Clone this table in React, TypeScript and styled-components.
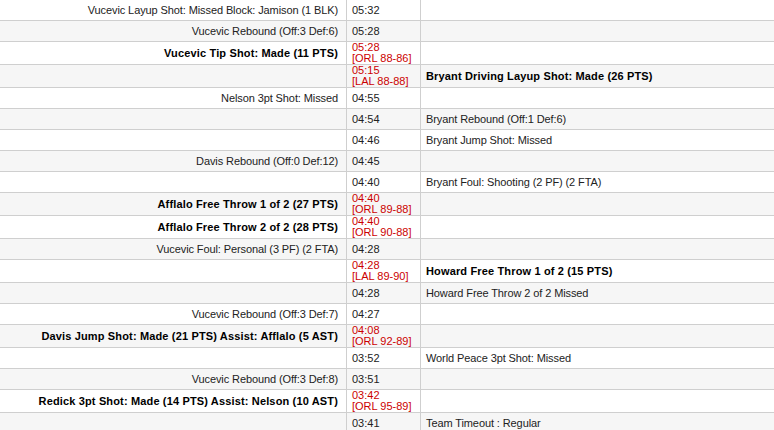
import React from "react";
import styled, { createGlobalStyle } from "styled-components";

const Global = createGlobalStyle`
  html, body { margin: 0; padding: 0; background: #fff; }
  body { font-family: "Liberation Sans", Arial, sans-serif; font-size: 11px; color: #222; }
`;

type Play = {
  time: string;
  score?: string;
  side: "L" | "R";
  text: string;
};

const plays: Play[] = [
  { time: "05:32", side: "L", text: "Vucevic Layup Shot: Missed Block: Jamison (1 BLK)" },
  { time: "05:28", side: "L", text: "Vucevic Rebound (Off:3 Def:6)" },
  { time: "05:28", score: "[ORL 88-86]", side: "L", text: "Vucevic Tip Shot: Made (11 PTS)" },
  { time: "05:15", score: "[LAL 88-88]", side: "R", text: "Bryant Driving Layup Shot: Made (26 PTS)" },
  { time: "04:55", side: "L", text: "Nelson 3pt Shot: Missed" },
  { time: "04:54", side: "R", text: "Bryant Rebound (Off:1 Def:6)" },
  { time: "04:46", side: "R", text: "Bryant Jump Shot: Missed" },
  { time: "04:45", side: "L", text: "Davis Rebound (Off:0 Def:12)" },
  { time: "04:40", side: "R", text: "Bryant Foul: Shooting (2 PF) (2 FTA)" },
  { time: "04:40", score: "[ORL 89-88]", side: "L", text: "Afflalo Free Throw 1 of 2 (27 PTS)" },
  { time: "04:40", score: "[ORL 90-88]", side: "L", text: "Afflalo Free Throw 2 of 2 (28 PTS)" },
  { time: "04:28", side: "L", text: "Vucevic Foul: Personal (3 PF) (2 FTA)" },
  { time: "04:28", score: "[LAL 89-90]", side: "R", text: "Howard Free Throw 1 of 2 (15 PTS)" },
  { time: "04:28", side: "R", text: "Howard Free Throw 2 of 2 Missed" },
  { time: "04:27", side: "L", text: "Vucevic Rebound (Off:3 Def:7)" },
  { time: "04:08", score: "[ORL 92-89]", side: "L", text: "Davis Jump Shot: Made (21 PTS) Assist: Afflalo (5 AST)" },
  { time: "03:52", side: "R", text: "World Peace 3pt Shot: Missed" },
  { time: "03:51", side: "L", text: "Vucevic Rebound (Off:3 Def:8)" },
  { time: "03:42", score: "[ORL 95-89]", side: "L", text: "Redick 3pt Shot: Made (14 PTS) Assist: Nelson (10 AST)" },
  { time: "03:41", side: "R", text: "Team Timeout : Regular" },
];

const Table = styled.div`
  display: flex;
  flex-direction: column;
  width: 774px;
`;

const Row = styled.div<{ $alt: boolean }>`
  display: grid;
  grid-template-columns: 347px 74px 1fr;
  border-bottom: 1px solid #cfcfcf;
  background: ${(p) => (p.$alt ? "#f6f6f6" : "#ffffff")};
`;

const Cell = styled.div<{ $bold?: boolean }>`
  display: flex;
  align-items: center;
  min-height: 20px;
  line-height: 11px;
  font-weight: ${(p) => (p.$bold ? "bold" : "normal")};
  letter-spacing: ${(p) => (p.$bold ? "0.15px" : "-0.1px")};
  color: ${(p) => (p.$bold ? "#000" : "#222")};
  white-space: nowrap;
`;

const AwayCell = styled(Cell)`
  justify-content: flex-end;
  padding-right: 8px;
  border-right: 1px solid #cfcfcf;
`;

const TimeCell = styled(Cell)`
  padding-left: 5px;
  border-right: 1px solid #cfcfcf;
  letter-spacing: 0;
`;

const HomeCell = styled(Cell)`
  padding-left: 5px;
`;

const Score = styled.div`
  display: flex;
  flex-direction: column;
  color: #cc0000;
  line-height: 11px;
`;

export default function App() {
  return (
    <>
      <Global />
      <Table>
        {plays.map((p, i) => {
          const bold = !!p.score;
          return (
            <Row key={i} $alt={i % 2 === 1}>
              <AwayCell $bold={bold}>{p.side === "L" ? p.text : ""}</AwayCell>
              <TimeCell>
                {p.score ? (
                  <Score>
                    <span>{p.time}</span>
                    <span>{p.score}</span>
                  </Score>
                ) : (
                  p.time
                )}
              </TimeCell>
              <HomeCell $bold={bold}>{p.side === "R" ? p.text : ""}</HomeCell>
            </Row>
          );
        })}
      </Table>
    </>
  );
}
